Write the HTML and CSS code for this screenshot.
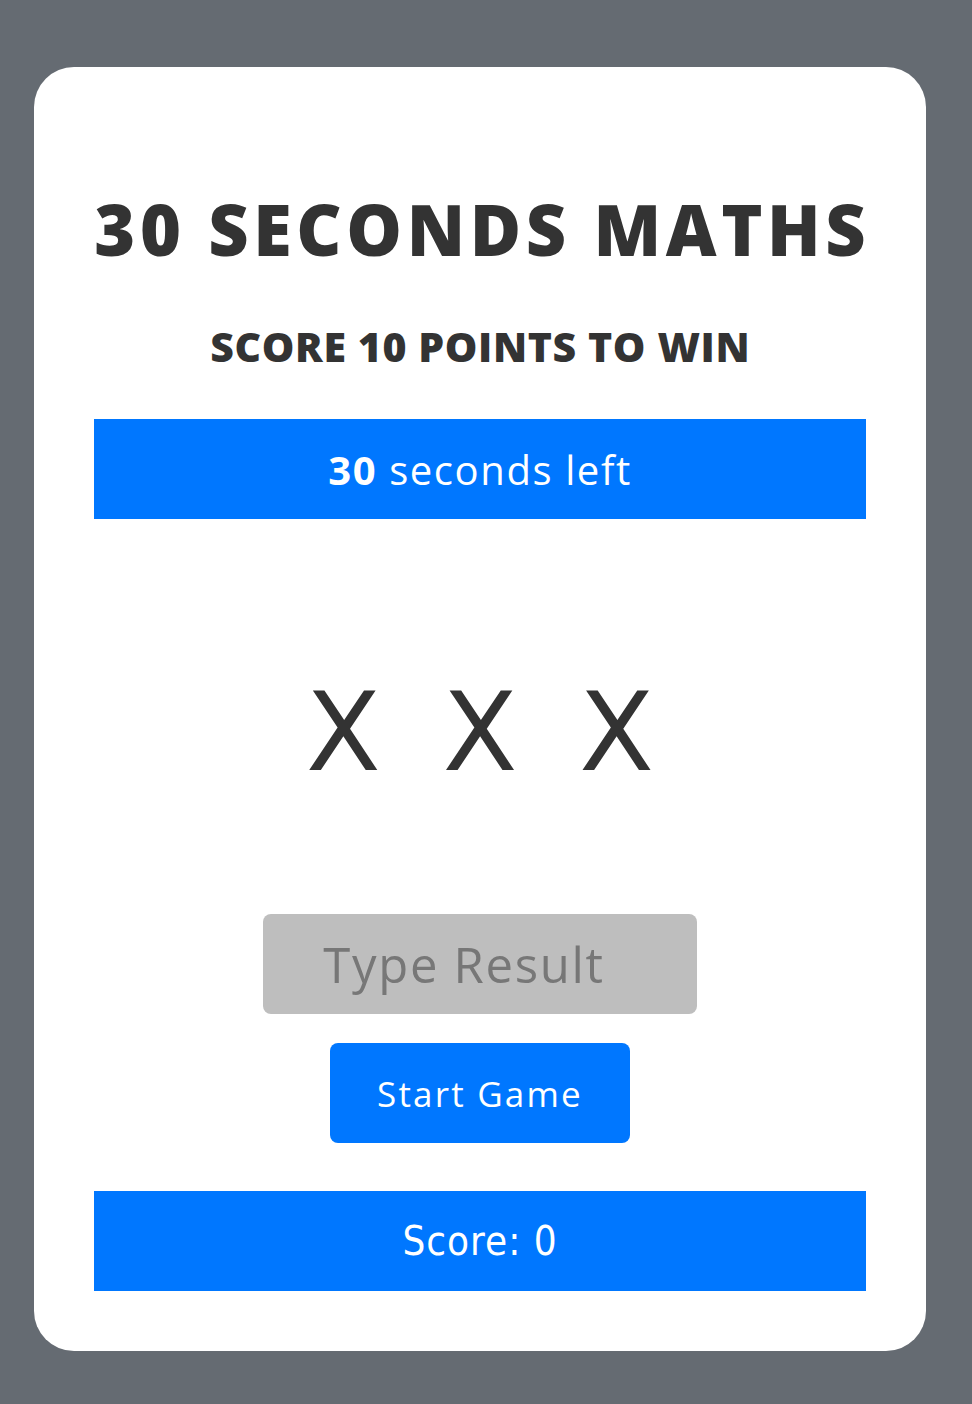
FILE: index.html
```html
<!DOCTYPE html>
<html lang="en">
<head>
<meta charset="utf-8">
<title>30 Seconds Maths</title>
<link rel="stylesheet" href="styles.css">
</head>
<body>
<main class="card">
  <h1 class="title">30 SECONDS MATHS</h1>
  <h2 class="subtitle">SCORE 10 POINTS TO WIN</h2>
  <div class="bar timer"><strong>30</strong>&nbsp;seconds left</div>
  <div class="problem">
    <span>X</span><span>X</span><span>X</span>
  </div>
  <input class="answer" type="text" placeholder="Type Result">
  <button class="start" type="button">Start Game</button>
  <div class="bar score">Score: 0</div>
</main>
</body>
</html>
```
FILE: styles.css
```css
html, body {
  margin: 0;
  padding: 0;
  background: #656b72;
}
body {
  padding: 67px 0 53px 34px;
  font-family: "Open Sans", "DejaVu Sans", sans-serif;
  color: #333333;
}
.card {
  width: 892px;
  box-sizing: border-box;
  background: #ffffff;
  border-radius: 40px;
  padding: 122px 60px 60px;
  display: flex;
  flex-direction: column;
  align-items: center;
}
.card > * {
  flex-shrink: 0;
}
.title {
  margin: 0;
  font-size: 70px;
  line-height: 80px;
  font-weight: 800;
  letter-spacing: 4.6px;
  padding-left: 4.6px;
  color: #333333;
  white-space: nowrap;
}
.subtitle {
  margin: 52px 0 0;
  font-size: 41px;
  line-height: 50px;
  font-weight: 800;
  letter-spacing: 0.6px;
  padding-left: 0.6px;
  color: #333333;
  white-space: nowrap;
}
.bar {
  align-self: stretch;
  height: 100px;
  background: #0077ff;
  color: #ffffff;
  display: flex;
  align-items: center;
  justify-content: center;
}
.timer {
  margin-top: 48px;
  font-size: 40px;
  letter-spacing: 1.6px;
}
.timer strong {
  font-weight: 700;
}
.problem {
  margin-top: 159px;
  display: flex;
  gap: 62px;
  font-family: "DejaVu Sans", sans-serif;
  font-size: 109px;
  line-height: 110px;
  font-weight: 400;
  color: #333333;
}
.answer {
  margin-top: 126px;
  width: 434px;
  height: 100px;
  box-sizing: border-box;
  border: none;
  border-radius: 8px;
  background: #bebebe;
  font-family: inherit;
  font-size: 49px;
  letter-spacing: 1.7px;
  text-align: center;
  padding: 0 32px 0 0;
  color: #333333;
  outline: none;
}
.answer::placeholder {
  color: #777777;
}
.start {
  margin-top: 29px;
  width: 300px;
  height: 100px;
  border: none;
  border-radius: 8px;
  background: #0077ff;
  color: #ffffff;
  font-family: inherit;
  font-size: 35px;
  letter-spacing: 2.2px;
  cursor: pointer;
}
.score {
  margin-top: 48px;
  font-family: "DejaVu Sans Condensed", "DejaVu Sans", sans-serif;
  font-stretch: condensed;
  font-size: 40px;
  letter-spacing: 1px;
}
```
